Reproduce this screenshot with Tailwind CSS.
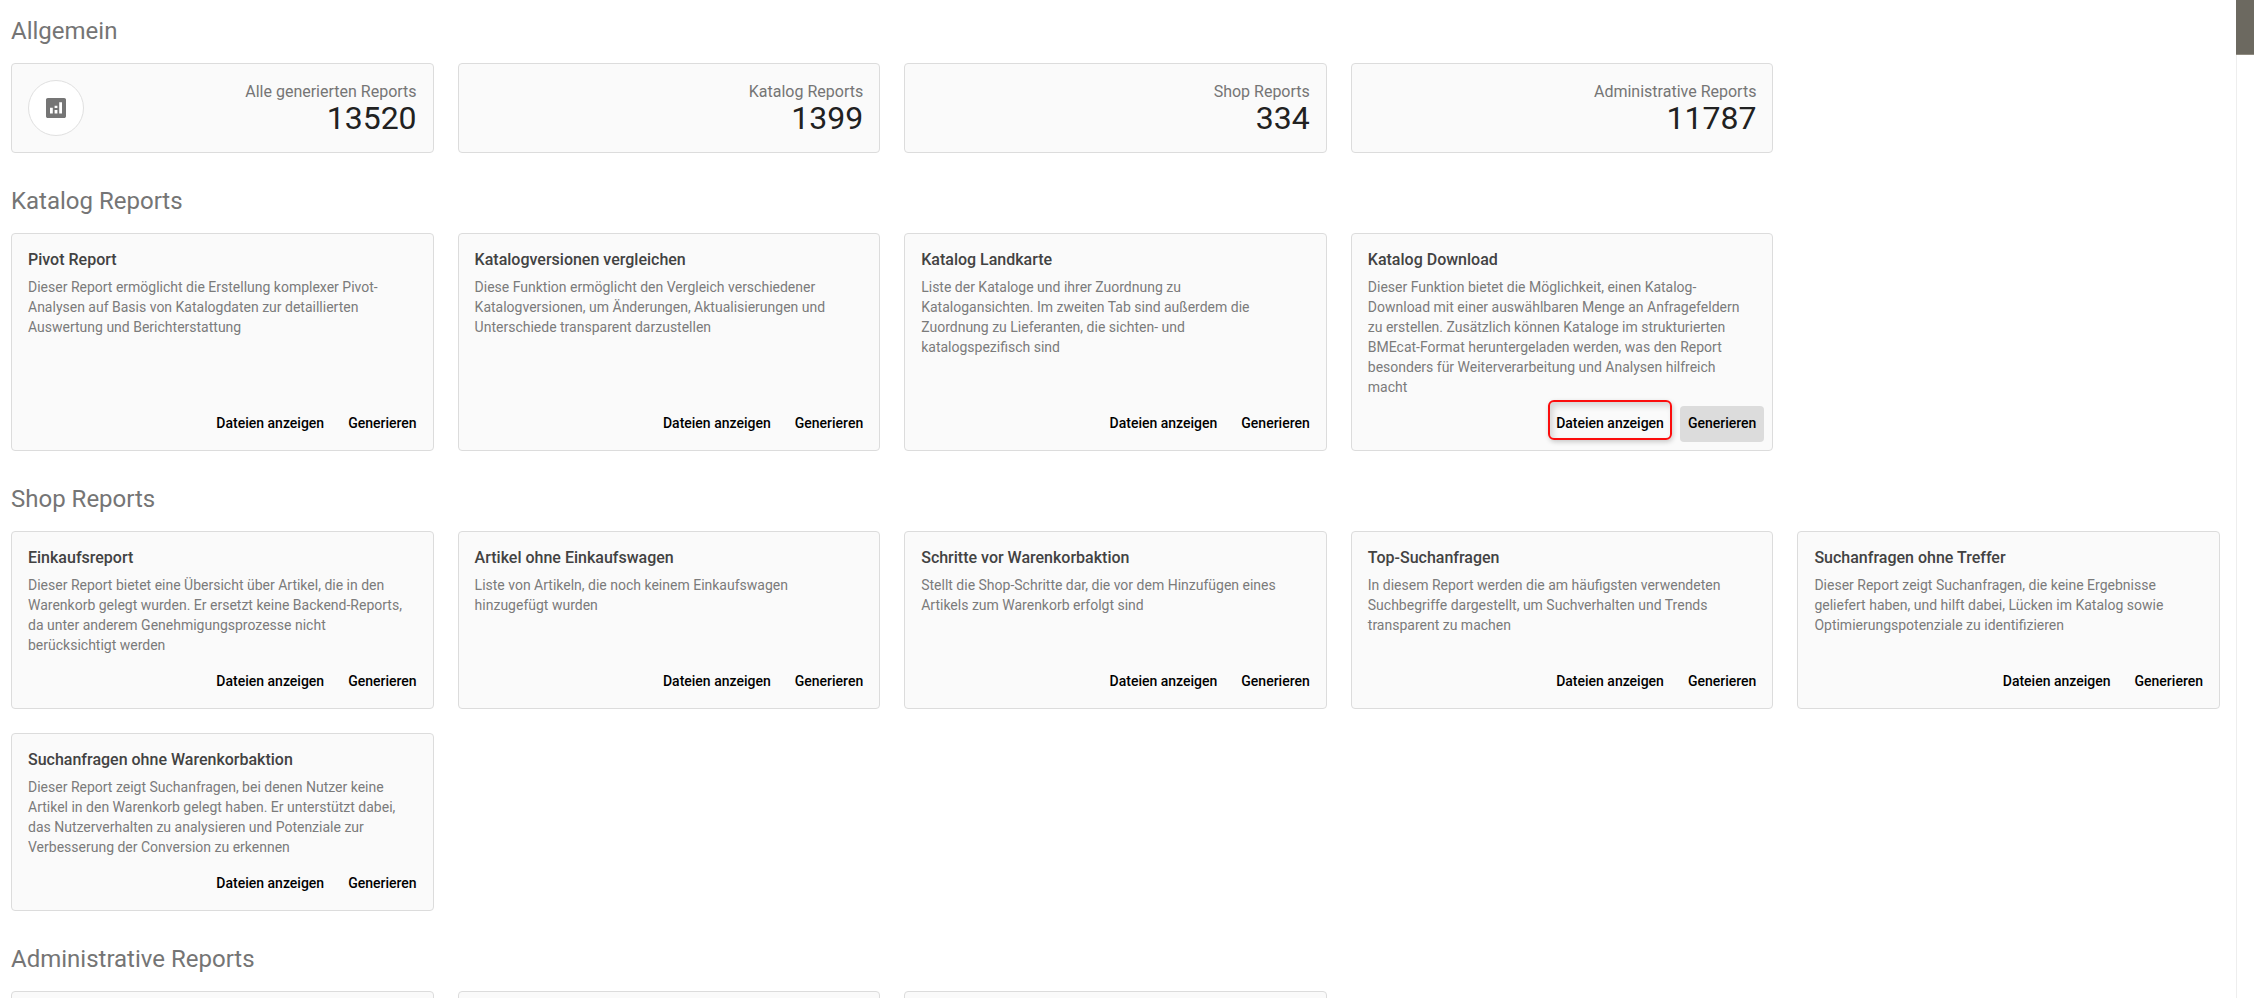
<!DOCTYPE html>
<html lang="de">

<head>
  <meta charset="UTF-8">
  <meta name="viewport" content="width=device-width, initial-scale=1.0">
  <title>Reports</title>
  <script src="https://cdn.jsdelivr.net/npm/@tailwindcss/browser@4"></script>
</head>

<body class="flex h-screen overflow-hidden bg-white font-['Roboto',sans-serif] text-[#212121]">
  <main class="min-w-0 flex-1 pt-[15px] pl-[11px] pr-4">

    <!-- Allgemein -->
    <section class="mb-8">
      <h2 class="mb-4 text-2xl leading-8 text-[#757575]">Allgemein</h2>
      <div class="grid grid-cols-1 gap-6 md:grid-cols-3 xl:grid-cols-5">
        <div class="flex justify-between rounded border border-[#dcdcdc] bg-[#fafafa] p-4">
          <div class="flex size-14 items-center justify-center rounded-full border border-[#e0e0e0] bg-white">
            <svg class="size-6 fill-[#757575]" viewBox="0 0 24 24" aria-hidden="true">
              <path d="M20.200 2H3.800C2.800 2 2 2.800 2 3.800v16.400c0 1 .8 1.800 1.800 1.800h16.400c1 0 1.800-.8 1.800-1.800V3.800c0-1-.8-1.800-1.800-1.800zM8.800 17.500H6V11.800h2.800v5.700zM13.400 17.500h-2.800V13.900h2.800v3.600zM13.400 11.900h-2.800V9.800h2.800v2.100zM18 17.500h-2.800V6.200H18v11.300z" fill-rule="evenodd" />
            </svg>
          </div>
          <div class="text-right">
            <p class="leading-6 text-[#757575]">Alle generierten Reports</p>
            <p class="text-[32px] leading-7">13520</p>
          </div>
        </div>
        <div class="rounded border border-[#dcdcdc] bg-[#fafafa] p-4 text-right">
          <p class="leading-6 text-[#757575]">Katalog Reports</p>
          <p class="text-[32px] leading-7">1399</p>
        </div>
        <div class="rounded border border-[#dcdcdc] bg-[#fafafa] p-4 text-right">
          <p class="leading-6 text-[#757575]">Shop Reports</p>
          <p class="text-[32px] leading-7">334</p>
        </div>
        <div class="rounded border border-[#dcdcdc] bg-[#fafafa] p-4 text-right">
          <p class="leading-6 text-[#757575]">Administrative Reports</p>
          <p class="text-[32px] leading-7">11787</p>
        </div>
      </div>
    </section>

    <!-- Katalog Reports -->
    <section class="mb-8">
      <h2 class="mb-4 text-2xl leading-8 text-[#757575]">Katalog Reports</h2>
      <div class="grid grid-cols-1 gap-6 md:grid-cols-3 xl:grid-cols-5">
        <article class="flex flex-col rounded border border-[#dcdcdc] bg-[#fafafa]">
          <div class="px-4 pt-4 pb-[9px]">
            <h3 class="mb-[7px] font-medium leading-5 text-[#424242]">Pivot Report</h3>
            <p class="text-sm text-[#7b7b7b]">Dieser Report ermöglicht die Erstellung komplexer Pivot-Analysen auf Basis von Katalogdaten zur detaillierten Auswertung und Berichterstattung</p>
          </div>
          <div class="mt-auto flex justify-end gap-2 px-2 pb-2">
            <button type="button" class="h-9 rounded px-2 pb-0.5 text-sm font-medium text-black">Dateien anzeigen</button>
            <button type="button" class="h-9 rounded px-2 pb-0.5 text-sm font-medium text-black">Generieren</button>
          </div>
        </article>
        <article class="flex flex-col rounded border border-[#dcdcdc] bg-[#fafafa]">
          <div class="px-4 pt-4 pb-[9px]">
            <h3 class="mb-[7px] font-medium leading-5 text-[#424242]">Katalogversionen vergleichen</h3>
            <p class="text-sm text-[#7b7b7b]">Diese Funktion ermöglicht den Vergleich verschiedener Katalogversionen, um Änderungen, Aktualisierungen und Unterschiede transparent darzustellen</p>
          </div>
          <div class="mt-auto flex justify-end gap-2 px-2 pb-2">
            <button type="button" class="h-9 rounded px-2 pb-0.5 text-sm font-medium text-black">Dateien anzeigen</button>
            <button type="button" class="h-9 rounded px-2 pb-0.5 text-sm font-medium text-black">Generieren</button>
          </div>
        </article>
        <article class="flex flex-col rounded border border-[#dcdcdc] bg-[#fafafa]">
          <div class="px-4 pt-4 pb-[9px]">
            <h3 class="mb-[7px] font-medium leading-5 text-[#424242]">Katalog Landkarte</h3>
            <p class="text-sm text-[#7b7b7b]">Liste der Kataloge und ihrer Zuordnung zu<br>Katalogansichten. Im zweiten Tab sind außerdem die<br>Zuordnung zu Lieferanten, die sichten- und<br>katalogspezifisch sind</p>
          </div>
          <div class="mt-auto flex justify-end gap-2 px-2 pb-2">
            <button type="button" class="h-9 rounded px-2 pb-0.5 text-sm font-medium text-black">Dateien anzeigen</button>
            <button type="button" class="h-9 rounded px-2 pb-0.5 text-sm font-medium text-black">Generieren</button>
          </div>
        </article>
        <article class="flex flex-col rounded border border-[#dcdcdc] bg-[#fafafa]">
          <div class="px-4 pt-4 pb-[9px]">
            <h3 class="mb-[7px] font-medium leading-5 text-[#424242]">Katalog Download</h3>
            <p class="text-sm text-[#7b7b7b]">Dieser Funktion bietet die Möglichkeit, einen Katalog-Download mit einer auswählbaren Menge an Anfragefeldern zu erstellen. Zusätzlich können Kataloge im strukturierten BMEcat-Format heruntergeladen werden, was den Report besonders für Weiterverarbeitung und Analysen hilfreich macht</p>
          </div>
          <div class="mt-auto flex justify-end gap-2 px-2 pb-2">
            <button type="button" class="relative h-9 rounded px-2 pb-0.5 text-sm font-medium text-black">
              Dateien anzeigen
              <!-- highlight frame -->
              <span class="absolute inset-x-0 -top-1.5 bottom-0.5 rounded-md border-2 border-[#fb0d0d] shadow-[1px_2px_5px_rgba(0,0,0,0.2),inset_3px_4px_6px_rgba(0,0,0,0.15)]"></span>
            </button>
            <button type="button" class="h-9 rounded bg-[#dcdcdc] px-2 pb-0.5 text-sm font-medium text-black">Generieren</button>
          </div>
        </article>
      </div>
    </section>

    <!-- Shop Reports -->
    <section class="mb-8">
      <h2 class="mb-4 text-2xl leading-8 text-[#757575]">Shop Reports</h2>
      <div class="grid grid-cols-1 gap-6 md:grid-cols-3 xl:grid-cols-5">
        <article class="flex flex-col rounded border border-[#dcdcdc] bg-[#fafafa]">
          <div class="px-4 pt-4 pb-[9px]">
            <h3 class="mb-[7px] font-medium leading-5 text-[#424242]">Einkaufsreport</h3>
            <p class="text-sm text-[#7b7b7b]">Dieser Report bietet eine Übersicht über Artikel, die in den Warenkorb gelegt wurden. Er ersetzt keine Backend-Reports, da unter anderem Genehmigungsprozesse nicht berücksichtigt werden</p>
          </div>
          <div class="mt-auto flex justify-end gap-2 px-2 pb-2">
            <button type="button" class="h-9 rounded px-2 pb-0.5 text-sm font-medium text-black">Dateien anzeigen</button>
            <button type="button" class="h-9 rounded px-2 pb-0.5 text-sm font-medium text-black">Generieren</button>
          </div>
        </article>
        <article class="flex flex-col rounded border border-[#dcdcdc] bg-[#fafafa]">
          <div class="px-4 pt-4 pb-[9px]">
            <h3 class="mb-[7px] font-medium leading-5 text-[#424242]">Artikel ohne Einkaufswagen</h3>
            <p class="text-sm text-[#7b7b7b]">Liste von Artikeln, die noch keinem Einkaufswagen hinzugefügt wurden</p>
          </div>
          <div class="mt-auto flex justify-end gap-2 px-2 pb-2">
            <button type="button" class="h-9 rounded px-2 pb-0.5 text-sm font-medium text-black">Dateien anzeigen</button>
            <button type="button" class="h-9 rounded px-2 pb-0.5 text-sm font-medium text-black">Generieren</button>
          </div>
        </article>
        <article class="flex flex-col rounded border border-[#dcdcdc] bg-[#fafafa]">
          <div class="px-4 pt-4 pb-[9px]">
            <h3 class="mb-[7px] font-medium leading-5 text-[#424242]">Schritte vor Warenkorbaktion</h3>
            <p class="text-sm text-[#7b7b7b]">Stellt die Shop-Schritte dar, die vor dem Hinzufügen eines Artikels zum Warenkorb erfolgt sind</p>
          </div>
          <div class="mt-auto flex justify-end gap-2 px-2 pb-2">
            <button type="button" class="h-9 rounded px-2 pb-0.5 text-sm font-medium text-black">Dateien anzeigen</button>
            <button type="button" class="h-9 rounded px-2 pb-0.5 text-sm font-medium text-black">Generieren</button>
          </div>
        </article>
        <article class="flex flex-col rounded border border-[#dcdcdc] bg-[#fafafa]">
          <div class="px-4 pt-4 pb-[9px]">
            <h3 class="mb-[7px] font-medium leading-5 text-[#424242]">Top-Suchanfragen</h3>
            <p class="text-sm text-[#7b7b7b]">In diesem Report werden die am häufigsten verwendeten Suchbegriffe dargestellt, um Suchverhalten und Trends transparent zu machen</p>
          </div>
          <div class="mt-auto flex justify-end gap-2 px-2 pb-2">
            <button type="button" class="h-9 rounded px-2 pb-0.5 text-sm font-medium text-black">Dateien anzeigen</button>
            <button type="button" class="h-9 rounded px-2 pb-0.5 text-sm font-medium text-black">Generieren</button>
          </div>
        </article>
        <article class="flex flex-col rounded border border-[#dcdcdc] bg-[#fafafa]">
          <div class="px-4 pt-4 pb-[9px]">
            <h3 class="mb-[7px] font-medium leading-5 text-[#424242]">Suchanfragen ohne Treffer</h3>
            <p class="text-sm text-[#7b7b7b]">Dieser Report zeigt Suchanfragen, die keine Ergebnisse geliefert haben, und hilft dabei, Lücken im Katalog sowie Optimierungspotenziale zu identifizieren</p>
          </div>
          <div class="mt-auto flex justify-end gap-2 px-2 pb-2">
            <button type="button" class="h-9 rounded px-2 pb-0.5 text-sm font-medium text-black">Dateien anzeigen</button>
            <button type="button" class="h-9 rounded px-2 pb-0.5 text-sm font-medium text-black">Generieren</button>
          </div>
        </article>
        <article class="flex flex-col rounded border border-[#dcdcdc] bg-[#fafafa]">
          <div class="px-4 pt-4 pb-[9px]">
            <h3 class="mb-[7px] font-medium leading-5 text-[#424242]">Suchanfragen ohne Warenkorbaktion</h3>
            <p class="text-sm text-[#7b7b7b]">Dieser Report zeigt Suchanfragen, bei denen Nutzer keine Artikel in den Warenkorb gelegt haben. Er unterstützt dabei, das Nutzerverhalten zu analysieren und Potenziale zur Verbesserung der Conversion zu erkennen</p>
          </div>
          <div class="mt-auto flex justify-end gap-2 px-2 pb-2">
            <button type="button" class="h-9 rounded px-2 pb-0.5 text-sm font-medium text-black">Dateien anzeigen</button>
            <button type="button" class="h-9 rounded px-2 pb-0.5 text-sm font-medium text-black">Generieren</button>
          </div>
        </article>
      </div>
    </section>

    <!-- Administrative Reports -->
    <section>
      <h2 class="mb-4 text-2xl leading-8 text-[#757575]">Administrative Reports</h2>
      <div class="grid grid-cols-1 gap-6 md:grid-cols-3 xl:grid-cols-5">
        <article class="min-h-44 rounded border border-[#dcdcdc] bg-[#fafafa]"></article>
        <article class="min-h-44 rounded border border-[#dcdcdc] bg-[#fafafa]"></article>
        <article class="min-h-44 rounded border border-[#dcdcdc] bg-[#fafafa]"></article>
      </div>
    </section>
  </main>

  <!-- page edge behind the panel -->
  <aside class="flex w-[18px] shrink-0 flex-col">
    <div class="h-[55px] border-b border-[#8f8b80] bg-[#6c6960]"></div>
    <div class="flex-1 border-l border-[#eeeeee]"></div>
  </aside>
</body>

</html>
